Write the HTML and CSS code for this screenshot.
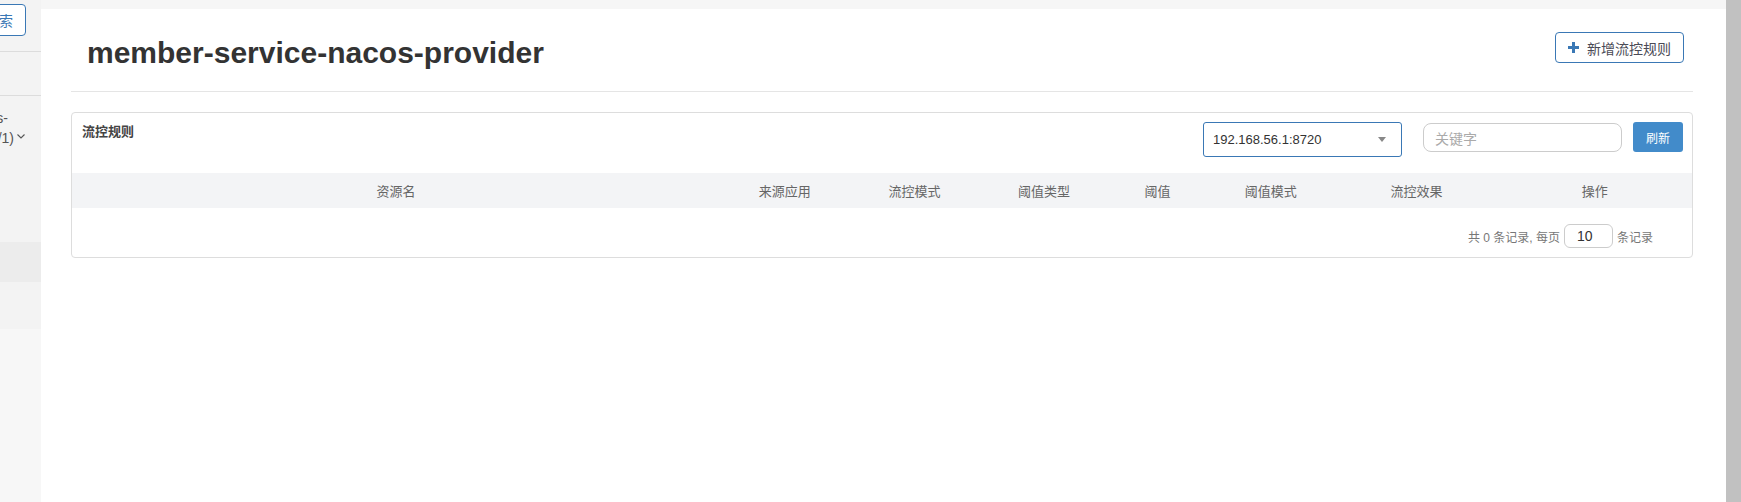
FILE: index.html
```html
<!DOCTYPE html>
<html lang="zh-CN">
<head>
<meta charset="utf-8">
<title>流控规则</title>
<link rel="stylesheet" href="styles.css">
</head>
<body>
<div class="app">
  <aside class="sidebar">
    <div class="sb-top"><button class="sb-search-btn">搜索</button></div>
    <div class="sb-gap"></div>
    <div class="sb-app">
      <div class="sb-line sb-line1"><span>member-service-nacos-</span></div>
      <div class="sb-line sb-line2"><span>provider (1/1)</span>
        <svg class="chev" width="8" height="5" viewBox="0 0 8 5"><polyline points="0.5,0.5 4,4 7.5,0.5" fill="none" stroke="#555" stroke-width="1.1"/></svg>
      </div>
    </div>
    <div class="sb-active"></div>
    <div class="sb-item"></div>
  </aside>

  <main class="main">
    <div class="topstrip"></div>
    <div class="content">
      <div class="page-header">
        <h1 class="app-title">member-service-nacos-provider</h1>
        <button class="btn-add">
          <svg class="plus" width="11" height="11" viewBox="0 0 11 11"><rect x="4" y="0" width="3" height="11" fill="#3a78b5"/><rect x="0" y="4" width="11" height="3" fill="#3a78b5"/></svg>
          <span>新增流控规则</span>
        </button>
      </div>

      <div class="panel">
        <div class="toolbar">
          <span class="panel-title">流控规则</span>
          <div class="tools">
            <div class="select"><span>192.168.56.1:8720</span><i class="caret"></i></div>
            <div class="search"><span class="placeholder">关键字</span></div>
            <button class="btn-refresh">刷新</button>
          </div>
        </div>
        <table class="rules">
          <colgroup>
            <col class="c40"><col class="c8"><col class="c8"><col class="c8"><col class="c6"><col class="c8"><col class="c10"><col class="c12">
          </colgroup>
          <thead>
            <tr>
              <th>资源名</th><th>来源应用</th><th>流控模式</th><th>阈值类型</th><th>阈值</th><th>阈值模式</th><th>流控效果</th><th>操作</th>
            </tr>
          </thead>
        </table>
        <div class="pager">
          <span>共 0 条记录, 每页</span>
          <div class="page-size">10</div>
          <span>条记录</span>
        </div>
      </div>
    </div>
  </main>

  <div class="scrollbar"></div>
</div>
</body>
</html>
```

FILE: styles.css
```css
* { box-sizing: border-box; }
html, body { margin: 0; padding: 0; }
body {
  font-family: "Liberation Sans", "Noto Sans CJK SC", Arial, sans-serif;
  color: #333;
  background: #fff;
  overflow: hidden;
}
button { font-family: inherit; }

.app { display: flex; height: 502px; width: 1741px; }

/* sidebar */
.sidebar {
  width: 41px;
  flex: none;
  background: #f7f7f7;
  overflow: hidden;
  display: flex;
  flex-direction: column;
}
.sb-top {
  height: 52px;
  flex: none;
  background: #f3f3f3;
  border-bottom: 1px solid #dcdcdc;
  display: flex;
  justify-content: flex-end;
  align-items: flex-start;
  padding: 4px 15px 0 0;
}
.sb-search-btn {
  flex: none;
  height: 32px;
  border: 1px solid #3a78b5;
  border-radius: 4px;
  background: #fff;
  color: #3a78b5;
  font-size: 14px;
  padding: 0 12px;
  white-space: nowrap;
}
.sb-gap {
  height: 44px;
  flex: none;
  background: #f3f3f3;
  border-bottom: 1px solid #dcdcdc;
}
.sb-app {
  height: 146px;
  flex: none;
  background: #f3f3f3;
  padding-top: 12px;
  font-size: 14px;
  color: #555;
}
.sb-line {
  display: flex;
  justify-content: flex-end;
  align-items: center;
  height: 20px;
  white-space: nowrap;
}
.sb-line span { flex: none; }
.sb-line1 { padding-right: 33px; }
.sb-line2 { padding-right: 16px; }
.chev { flex: none; margin-left: 3px; margin-top: -3px; }
.sb-active { height: 40px; flex: none; background: #ececec; }
.sb-item { height: 47px; flex: none; background: #f3f3f3; }

/* main */
.main {
  flex: 1;
  display: flex;
  flex-direction: column;
  min-width: 0;
}
.topstrip { height: 9px; flex: none; background: #f6f6f6; }
.content {
  flex: 1;
  background: #fff;
  padding: 0 33px 0 30px;
}

.page-header {
  height: 83px;
  display: flex;
  justify-content: space-between;
  align-items: flex-start;
  padding: 23px 9px 0 16px;
  border-bottom: 1px solid #e5e5e5;
}
.app-title {
  margin: 4px 0 0 0;
  font-size: 30px;
  line-height: 33px;
  font-weight: bold;
  color: #333;
}
.btn-add {
  display: inline-flex;
  align-items: center;
  gap: 8px;
  height: 31px;
  padding: 0 12px 0 12px;
  background: #fff;
  border: 1px solid #3a78b5;
  border-radius: 4px;
  color: #4a4a55;
  font-size: 14px;
}
.plus { flex: none; }

/* panel */
.panel {
  margin-top: 20px;
  border: 1px solid #ddd;
  border-radius: 4px;
  background: #fff;
}
.toolbar {
  height: 60px;
  display: flex;
  justify-content: space-between;
  align-items: flex-start;
  padding: 9px 9px 0 10px;
}
.panel-title {
  font-size: 13px;
  line-height: 20px;
  font-weight: bold;
  color: #444;
}
.tools { display: flex; align-items: flex-start; }
.select {
  width: 199px;
  height: 35px;
  border: 1px solid #3a78b5;
  border-radius: 3px;
  display: flex;
  align-items: center;
  justify-content: space-between;
  padding: 0 15px 0 9px;
  font-size: 13px;
  color: #333;
  margin-right: 21px;
}
.caret {
  width: 0;
  height: 0;
  border-left: 4.5px solid transparent;
  border-right: 4.5px solid transparent;
  border-top: 5px solid #888;
}
.search {
  width: 199px;
  height: 29px;
  margin-top: 1px;
  margin-right: 11px;
  border: 1px solid #ccc;
  border-radius: 8px;
  display: flex;
  align-items: center;
  padding-left: 11px;
}
.placeholder { font-size: 14px; color: #aaa; }
.btn-refresh {
  width: 50px;
  height: 30px;
  border: none;
  border-radius: 3px;
  background: #428bca;
  color: #fff;
  font-size: 12px;
  padding: 0;
}

/* table */
.rules {
  width: 100%;
  border-collapse: collapse;
  table-layout: fixed;
}
.c40 { width: 40%; }
.c12 { width: 12%; }
.c10 { width: 10%; }
.c8 { width: 8%; }
.c6 { width: 6%; }
.rules th {
  height: 35px;
  padding: 0;
  background: #f3f4f6;
  font-size: 13px;
  font-weight: normal;
  color: #666;
  text-align: center;
}

.pager {
  display: flex;
  justify-content: flex-end;
  align-items: center;
  padding: 16px 39px 9px 0;
  font-size: 12px;
  color: #777;
}
.page-size {
  width: 49px;
  height: 24px;
  margin: 0 4px;
  border: 1px solid #ccc;
  border-radius: 6px;
  font-size: 14px;
  color: #333;
  line-height: 22px;
  padding-left: 12px;
}

.scrollbar {
  width: 15px;
  flex: none;
  background: #c1c1c1;
}
```
